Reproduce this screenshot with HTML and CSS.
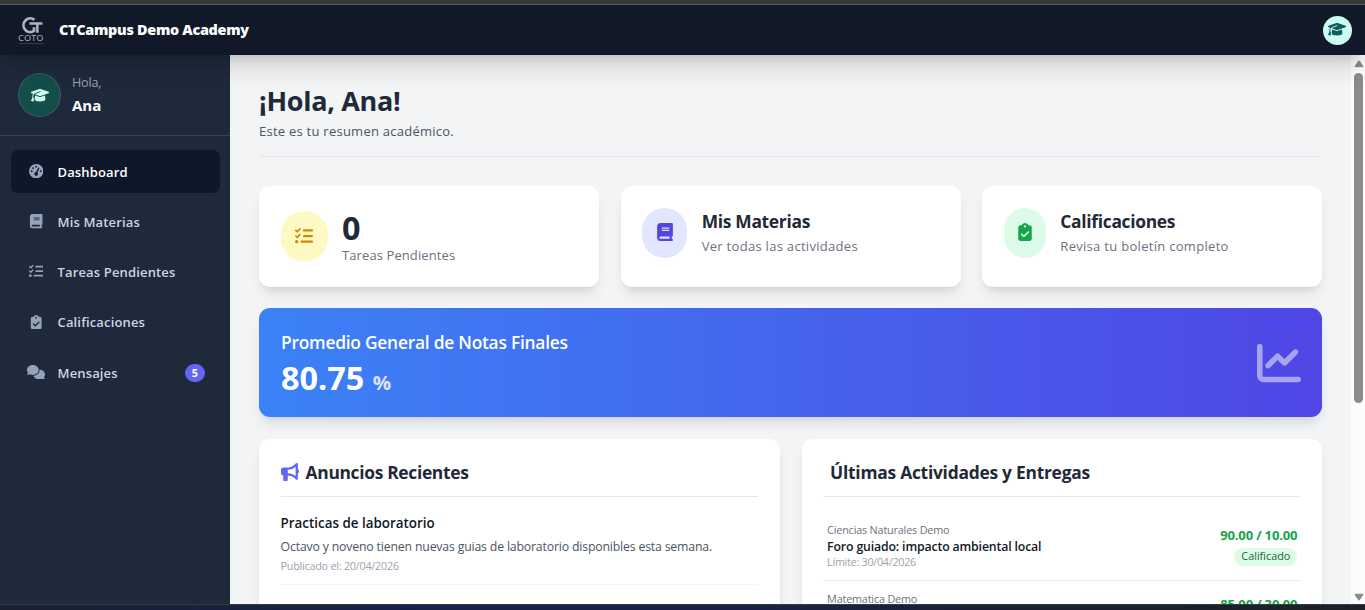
FILE: index.html
```
<!DOCTYPE html>
<html lang="es">
<head>
  <meta charset="UTF-8">
  <meta name="viewport" content="width=device-width, initial-scale=1.0">
  <title>CTCampus Demo Academy</title>
  <link rel="stylesheet" href="styles.css">
</head>
<body>

<!-- Iconos -->
<svg class="sprite" width="0" height="0">
  <symbol id="i-cap" viewBox="0 0 640 512"><path d="M320 32c-8.1 0-16.1 1.4-23.7 4.1L15.8 137.4C6.3 140.9 0 149.9 0 160s6.3 19.1 15.8 22.6l57.9 20.9C57.3 229.3 48 259.8 48 291.9v28.1c0 28.4-10.8 57.7-22.3 80.8c-6.5 13-13.9 25.8-22.5 37.6C0 442.7-.9 448.3 .9 453.4s6 8.9 11.2 10.2l64 16c4.2 1.1 8.7 .3 12.4-2s6.3-6.1 7.1-10.4c8.6-42.8 4.3-81.2-2.1-108.7C90.3 344.3 86 329.8 80 316.5V291.9c0-30.2 10.2-58.7 27.9-81.5c12.9-15.5 29.6-28 49.2-35.7l157-61.7c8.2-3.2 17.5 .8 20.7 9s-.8 17.5-9 20.7l-157 61.7c-12.4 4.9-23.3 12.4-32.2 21.6l159.6 57.6c7.6 2.7 15.6 4.1 23.7 4.1s16.1-1.4 23.7-4.1L624.2 182.6c9.5-3.4 15.8-12.5 15.8-22.6s-6.3-19.1-15.8-22.6L343.7 36.1C336.1 33.4 328.1 32 320 32zM128 408c0 35.3 86 72 192 72s192-36.7 192-72L496.7 262.6 354.5 314c-11.1 4-22.8 6-34.5 6s-23.5-2-34.5-6L143.3 262.6 128 408z"/></symbol>
  <symbol id="i-gauge" viewBox="0 0 512 512"><path d="M0 256a256 256 0 1 1 512 0A256 256 0 1 1 0 256zM288 96a32 32 0 1 0 -64 0 32 32 0 1 0 64 0zM256 416c35.3 0 64-28.7 64-64c0-17.4-6.9-33.1-18.1-44.6L366 161.7c5.3-12.1-.2-26.3-12.3-31.6s-26.3 .2-31.6 12.3L257.9 288c-.6 0-1.3 0-1.9 0c-35.3 0-64 28.7-64 64s28.7 64 64 64zM176 144a32 32 0 1 0 -64 0 32 32 0 1 0 64 0zM96 288a32 32 0 1 0 0-64 32 32 0 1 0 0 64zm352-32a32 32 0 1 0 -64 0 32 32 0 1 0 64 0z"/></symbol>
  <symbol id="i-book" viewBox="0 0 448 512"><path d="M96 0C43 0 0 43 0 96V416c0 53 43 96 96 96H384h32c17.7 0 32-14.3 32-32s-14.3-32-32-32V384c17.7 0 32-14.3 32-32V32c0-17.7-14.3-32-32-32H384 96zm0 384H352v64H96c-17.7 0-32-14.3-32-32s14.3-32 32-32zm32-240c0-8.8 7.2-16 16-16H336c8.8 0 16 7.2 16 16s-7.2 16-16 16H144c-8.8 0-16-7.2-16-16zm16 48H336c8.8 0 16 7.2 16 16s-7.2 16-16 16H144c-8.8 0-16-7.2-16-16s7.2-16 16-16z"/></symbol>
  <symbol id="i-list" viewBox="0 0 512 512"><path d="M152.1 38.2c9.9 8.9 10.7 24 1.8 33.9l-72 80c-4.4 4.9-10.6 7.8-17.2 7.9s-12.9-2.4-17.6-7L7 113C-2.3 103.6-2.3 88.4 7 79s24.6-9.4 33.9 0l22.1 22.1 55.1-61.2c8.9-9.9 24-10.7 33.9-1.8zm0 160c9.9 8.9 10.7 24 1.8 33.9l-72 80c-4.4 4.9-10.6 7.8-17.2 7.9s-12.9-2.4-17.6-7L7 273c-9.4-9.4-9.4-24.6 0-33.9s24.6-9.4 33.9 0l22.1 22.1 55.1-61.2c8.9-9.9 24-10.7 33.9-1.8zM224 96c0-17.7 14.3-32 32-32H480c17.7 0 32 14.3 32 32s-14.3 32-32 32H256c-17.7 0-32-14.3-32-32zm0 160c0-17.7 14.3-32 32-32H480c17.7 0 32 14.3 32 32s-14.3 32-32 32H256c-17.7 0-32-14.3-32-32zM160 416c0-17.7 14.3-32 32-32H480c17.7 0 32 14.3 32 32s-14.3 32-32 32H192c-17.7 0-32-14.3-32-32zM48 368a48 48 0 1 1 0 96 48 48 0 1 1 0-96z"/></symbol>
  <symbol id="i-clip" viewBox="0 0 384 512"><path d="M192 0c-41.8 0-77.4 26.7-90.5 64H64C28.7 64 0 92.7 0 128V448c0 35.3 28.7 64 64 64H320c35.3 0 64-28.7 64-64V128c0-35.3-28.7-64-64-64H282.5C269.4 26.7 233.8 0 192 0zm0 64a32 32 0 1 1 0 64 32 32 0 1 1 0-64zM305 273L177 401c-9.4 9.4-24.6 9.4-33.9 0L79 337c-9.4-9.4-9.4-24.6 0-33.9s24.6-9.4 33.9 0l47 47L271 239c9.4-9.4 24.6-9.4 33.9 0s9.4 24.6 0 33.9z"/></symbol>
  <symbol id="i-comments" viewBox="0 0 640 512"><path d="M208 352c114.9 0 208-78.8 208-176S322.9 0 208 0S0 78.8 0 176c0 38.6 14.7 74.3 39.6 103.4c-3.5 9.4-8.7 17.7-14.2 24.7c-4.8 6.2-9.7 11-13.3 14.3c-1.8 1.6-3.3 2.9-4.3 3.7c-.5 .4-.9 .7-1.1 .8l-.2 .2C1 327.2-1.4 334.4 .8 340.9S9.1 352 16 352c21.8 0 43.8-5.6 62.1-12.5c9.2-3.5 17.8-7.4 25.2-11.4C134.1 343.3 169.8 352 208 352zM448 176c0 112.3-99.1 196.9-216.5 207C255.8 457.4 336.4 512 432 512c38.2 0 73.9-8.7 104.7-23.9c7.5 4 16 7.9 25.2 11.4c18.3 6.9 40.3 12.5 62.1 12.5c6.9 0 13.1-4.5 15.2-11.1c2.1-6.6-.2-13.8-5.8-17.9l-.2-.2c-.2-.2-.6-.4-1.1-.8c-1-.8-2.5-2-4.3-3.7c-3.6-3.3-8.5-8.1-13.3-14.3c-5.5-7-10.7-15.4-14.2-24.7c24.9-29 39.6-64.7 39.6-103.4c0-92.8-84.9-168.9-192.6-175.5c.4 5.1 .6 10.3 .6 15.5z"/></symbol>
  <symbol id="i-chart" viewBox="0 0 512 512"><path d="M64 64c0-17.7-14.3-32-32-32S0 46.3 0 64V400c0 44.2 35.8 80 80 80H480c17.7 0 32-14.3 32-32s-14.3-32-32-32H80c-8.8 0-16-7.2-16-16V64zm406.6 86.6c12.5-12.5 12.5-32.8 0-45.3s-32.8-12.5-45.3 0L320 210.7l-57.4-57.4c-12.5-12.5-32.8-12.5-45.3 0l-112 112c-12.5 12.5-12.5 32.8 0 45.3s32.8 12.5 45.3 0L240 221.3l57.4 57.4c12.5 12.5 32.8 12.5 45.3 0l128-128z"/></symbol>
  <symbol id="i-horn" viewBox="0 0 512 512"><path d="M480 32c0-12.9-7.8-24.6-19.8-29.6s-25.7-2.2-34.9 6.9L381.7 53c-48 48-113.1 75-181 75H192 160 64c-35.3 0-64 28.7-64 64v96c0 35.3 28.7 64 64 64l0 128c0 17.7 14.3 32 32 32h64c17.7 0 32-14.3 32-32V352l8.7 0c67.9 0 133 27 181 75l43.6 43.6c9.2 9.2 22.9 11.9 34.9 6.9s19.8-16.6 19.8-29.6V300.4c18.6-8.8 32-32.5 32-60.4s-13.4-51.6-32-60.4V32zm-64 76.7V240 371.3C357.2 317.8 280.5 288 200.7 288H192V192h8.7c79.8 0 156.5-29.8 215.3-83.3z"/></symbol>
</svg>

<div class="window-top"></div>

<header class="topbar">
  <div class="logo">
    <svg class="logo-mark" viewBox="0 0 22 16">
      <path d="M13.8 2.6A6.5 6.5 0 1 0 13.4 13.2V9.6" fill="none" stroke="#aeb2bd" stroke-width="2.6"/>
      <path d="M9 6H21.5M16.6 6V15" fill="none" stroke="#aeb2bd" stroke-width="2.4"/>
    </svg>
    <span class="logo-name">COTO</span>
    <span class="logo-line"></span>
  </div>
  <span class="brand">CTCampus Demo Academy</span>
  <div class="user-btn"><svg class="icon"><use href="#i-cap"/></svg></div>
</header>

<div class="layout">
  <aside class="sidebar">
    <div class="profile">
      <div class="avatar"><svg class="icon"><use href="#i-cap"/></svg></div>
      <div>
        <p class="profile-hi">Hola,</p>
        <p class="profile-name">Ana</p>
      </div>
    </div>
    <nav class="menu">
      <a class="menu-item active"><span class="menu-icon"><svg class="icon"><use href="#i-gauge"/></svg></span><span>Dashboard</span></a>
      <a class="menu-item"><span class="menu-icon"><svg class="icon"><use href="#i-book"/></svg></span><span>Mis Materias</span></a>
      <a class="menu-item"><span class="menu-icon"><svg class="icon"><use href="#i-list"/></svg></span><span>Tareas Pendientes</span></a>
      <a class="menu-item"><span class="menu-icon"><svg class="icon"><use href="#i-clip"/></svg></span><span>Calificaciones</span></a>
      <a class="menu-item"><span class="menu-icon"><svg class="icon wide"><use href="#i-comments"/></svg></span><span>Mensajes</span><span class="badge">5</span></a>
    </nav>
  </aside>

  <main class="content">
    <div class="page-head">
      <h1>¡Hola, Ana!</h1>
      <p>Este es tu resumen académico.</p>
    </div>

    <div class="cards">
      <div class="card card-tasks">
        <div class="circle yellow"><svg class="icon"><use href="#i-list"/></svg></div>
        <div>
          <p class="count">0</p>
          <p class="card-sub">Tareas Pendientes</p>
        </div>
      </div>
      <div class="card">
        <div class="circle indigo"><svg class="icon"><use href="#i-book"/></svg></div>
        <div>
          <h3>Mis Materias</h3>
          <p class="card-sub">Ver todas las actividades</p>
        </div>
      </div>
      <div class="card">
        <div class="circle green"><svg class="icon"><use href="#i-clip"/></svg></div>
        <div>
          <h3>Calificaciones</h3>
          <p class="card-sub">Revisa tu boletín completo</p>
        </div>
      </div>
    </div>

    <div class="average">
      <div class="average-text">
        <h2>Promedio General de Notas Finales</h2>
        <p class="average-value">80.75 <span>%</span></p>
      </div>
      <svg class="icon"><use href="#i-chart"/></svg>
    </div>

    <div class="panels">
      <section class="panel">
        <h2 class="panel-title"><svg class="icon"><use href="#i-horn"/></svg><span>Anuncios Recientes</span></h2>
        <article class="news">
          <h4>Practicas de laboratorio</h4>
          <p class="news-body">Octavo y noveno tienen nuevas guias de laboratorio disponibles esta semana.</p>
          <p class="news-date">Publicado el: 20/04/2026</p>
        </article>
      </section>
      <section class="panel">
        <h2 class="panel-title title-activity"><span>Últimas Actividades y Entregas</span></h2>
        <div class="activity first">
          <div>
            <p class="subject">Ciencias Naturales Demo</p>
            <p class="task">Foro guiado: impacto ambiental local</p>
            <p class="limit">Límite: 30/04/2026</p>
          </div>
          <div class="result">
            <p class="grade">90.00 / 10.00</p>
            <span class="status">Calificado</span>
          </div>
        </div>
        <div class="activity">
          <div>
            <p class="subject">Matematica Demo</p>
          </div>
          <div class="result">
            <p class="grade">85.00 / 30.00</p>
          </div>
        </div>
      </section>
    </div>
  </main>

  <div class="scrollbar">
    <svg viewBox="0 0 10 8"><path d="M4 1.2Q5 0 6 1.2L9.3 6Q9.6 7.3 8.4 7.3H1.6Q.4 7.3 .7 6Z"/></svg>
    <div class="thumb"></div>
    <svg class="down" viewBox="0 0 10 8"><path d="M4 6.8Q5 8 6 6.8L9.3 2Q9.6 .7 8.4 .7H1.6Q.4 .7 .7 2Z"/></svg>
  </div>
</div>

<div class="window-bottom"></div>

</body>
</html>
```

FILE: styles.css
```
* {
  box-sizing: border-box;
}
html {
  font-size: 14.4px;
}
body {
  margin: 0;
  height: 610px;
  overflow: hidden;
  display: flex;
  flex-direction: column;
  font-family: "Open Sans", "Noto Sans", sans-serif;
  background-color: #f3f4f6;
  color: #1f2937;
}
h1, h2, h3, h4, p {
  margin: 0;
  white-space: nowrap;
}
.sprite {
  display: none;
}
.icon {
  width: 1em;
  height: 1em;
  fill: currentColor;
  display: block;
}
.window-top {
  height: 5px;
  flex: none;
  background-color: #363636;
  border-bottom: 1px solid #5c5c5c;
}
.window-bottom {
  height: 6px;
  flex: none;
  border-top: 1px solid #343c46;
  background: linear-gradient(90deg, #1a2130, #14204a 30%, #1a2148 55%, #1a2130 75%, #1c2128);
}

/* Barra superior */
.topbar {
  height: 50px;
  flex: none;
  display: flex;
  align-items: center;
  padding: 0 13px 0 18px;
  background-color: #111827;
  box-shadow: 0 18px 22px -4px rgba(0, 0, 0, .12), 0 7px 9px -4px rgba(0, 0, 0, .12);
  z-index: 2;
}
.logo {
  width: 26px;
  height: 29px;
  padding-top: 1px;
  display: flex;
  flex-direction: column;
  align-items: center;
}
.logo-mark {
  width: 23px;
  height: 17px;
  margin-left: 1px;
  flex: none;
}
.logo-name {
  font-family: Lato, sans-serif;
  font-size: 8.4px;
  line-height: 9px;
  letter-spacing: .5px;
  color: #aeb2bd;
}
.logo-line {
  width: 24px;
  border-top: 1px solid #343a4a;
}
.brand {
  margin: -1px 0 0 15px;
  font-weight: 800;
  font-size: 14.4px;
  letter-spacing: -.29px;
  color: #fff;
}
.user-btn {
  width: 29px;
  height: 29px;
  margin-left: auto;
  border-radius: 50%;
  background-color: #ccfbf1;
  color: #115e59;
  display: flex;
  align-items: center;
  justify-content: center;
}
.user-btn .icon {
  width: 18px;
  height: 14.4px;
  margin: -1px 2px 0 0;
}
.layout {
  flex: 1;
  min-height: 0;
  display: flex;
}

/* Menu lateral */
.sidebar {
  width: 230px;
  flex: none;
  background-color: #1e293b;
}
.profile {
  height: 81px;
  display: flex;
  align-items: center;
  gap: 11px;
  padding-left: 18px;
  border-bottom: 1px solid #334155;
}
.avatar {
  width: 43px;
  height: 44px;
  border-radius: 50%;
  border: 1px solid #475569;
  background-color: #134e4a;
  color: #ccfbf1;
  display: flex;
  align-items: center;
  justify-content: center;
}
.avatar .icon {
  width: 18px;
  height: 14.4px;
}
.profile-hi {
  font-size: 12.6px;
  line-height: 20px;
  letter-spacing: -.2px;
  color: #94a3b8;
}
.profile-name {
  font-size: 15px;
  line-height: 24px;
  font-weight: 700;
  color: #fff;
}
.menu {
  display: flex;
  flex-direction: column;
  gap: 7.2px;
  padding: 14px 10px 0 11px;
}
.menu-item {
  height: 43.1px;
  border-radius: 7px;
  display: flex;
  align-items: center;
  padding: 0 15px 0 14px;
  font-size: 13px;
  font-weight: 600;
  letter-spacing: .15px;
  color: #cbd5e1;
}
.menu-item.active {
  background-color: #0f172a;
  color: #fff;
}
.menu-icon {
  width: 22px;
  margin: -1px 10.5px 0 0;
  display: flex;
  justify-content: center;
  font-size: 14.4px;
  color: #94a3b8;
}
.icon.wide {
  width: 18px;
}
.badge {
  margin-left: auto;
  width: 20px;
  height: 18px;
  border-radius: 9px;
  background-color: #6366f1;
  color: #fff;
  font-size: 10.8px;
  line-height: 18px;
  font-weight: 700;
  text-align: center;
}

/* Contenido */
.content {
  flex: 1;
  overflow: hidden;
  padding: 29px 28.6px 29px 29px;
}
.page-head {
  height: 73px;
  border-bottom: 1px solid #e5e7eb;
}
.page-head h1 {
  font-size: 27px;
  line-height: 34px;
  font-weight: 700;
  letter-spacing: -.3px;
}
.page-head p {
  font-size: 13px;
  line-height: 22px;
  margin-top: 2px;
  color: #4b5563;
  letter-spacing: .25px;
}
.cards {
  display: grid;
  grid-template-columns: repeat(3, 1fr);
  gap: 21.6px;
  margin-top: 29px;
}
.card,
.panel,
.average {
  border-radius: 11px;
  background-color: #fff;
  box-shadow: 0 9px 13px -3px rgba(0, 0, 0, .1), 0 4px 6px -4px rgba(0, 0, 0, .1);
}
.card {
  height: 101px;
  padding: 22px 21.6px;
  display: flex;
  align-items: flex-start;
  gap: 14.4px;
}
.card-tasks {
  align-items: center;
}
.circle {
  height: 50px;
  padding-bottom: 2px;
  border-radius: 25px;
  display: flex;
  align-items: center;
  justify-content: center;
  font-size: 18px;
}
.yellow {
  width: 47px;
  height: 51px;
  background-color: #fef9c3;
  color: #ca8a04;
}
.indigo {
  width: 45px;
  background-color: #e0e7ff;
  color: #4f46e5;
}
.green {
  width: 42px;
  background-color: #dcfce7;
  color: #16a34a;
}
.card h3 {
  font-size: 17.4px;
  line-height: 26px;
  font-weight: 700;
  letter-spacing: -.3px;
}
.card-sub {
  margin-top: 1px;
  font-size: 13px;
  line-height: 22px;
  letter-spacing: .3px;
  color: #6b7280;
}
.card-tasks .card-sub {
  margin-top: 0;
  letter-spacing: .1px;
}
.count {
  padding-top: 3px;
  font-size: 32.4px;
  line-height: 34px;
  font-weight: 700;
}
.average {
  height: 109px;
  margin-top: 21px;
  padding: 0 21px 0 22px;
  display: flex;
  align-items: center;
  justify-content: space-between;
  background: linear-gradient(90deg, #3b82f6, #4f46e5);
  color: #fff;
}
.average-text {
  padding-top: 6px;
}
.average h2 {
  font-size: 17.4px;
  line-height: 26px;
  font-weight: 600;
  letter-spacing: -.25px;
}
.average-value {
  font-size: 32.4px;
  line-height: 40px;
  font-weight: 700;
  margin-top: 2px;
}
.average-value span {
  font-size: 20.4px;
  font-weight: 700;
  opacity: .8;
}
.average .icon {
  font-size: 44px;
  opacity: .5;
}
.panels {
  display: grid;
  grid-template-columns: 1fr 1fr;
  gap: 21.6px;
  margin-top: 22px;
}
.panel {
  height: 300px;
  padding: 21.6px;
}
.panel-title {
  height: 36px;
  display: flex;
  gap: 7px;
  border-bottom: 1px solid #e5e7eb;
  font-size: 17.4px;
  line-height: 23px;
  font-weight: 700;
  letter-spacing: -.32px;
}
.panel-title .icon {
  margin-top: 2px;
  font-size: 18px;
  color: #6366f1;
}
.title-activity {
  padding-left: 7px;
  letter-spacing: -.25px;
}
.news {
  height: 88px;
  padding-top: 15px;
  border-bottom: 1px solid #f3f4f6;
}
.news h4 {
  font-size: 13.4px;
  line-height: 22px;
  font-weight: 600;
  color: #111827;
}
.news-body {
  font-size: 12.3px;
  line-height: 25px;
  letter-spacing: -.18px;
  color: #4b5563;
}
.news-date {
  font-size: 10.8px;
  line-height: 14px;
  letter-spacing: -.24px;
  color: #9ca3af;
}
.activity {
  display: flex;
  justify-content: space-between;
  padding: 10px 3.5px 0 4px;
}
.activity.first {
  height: 84px;
  padding-top: 25px;
  border-bottom: 1px solid #e5e7eb;
}
.subject {
  font-size: 10.8px;
  line-height: 16px;
  letter-spacing: -.17px;
  color: #6b7280;
}
.task {
  font-size: 12.3px;
  line-height: 17px;
  font-weight: 600;
  letter-spacing: -.15px;
  color: #111827;
}
.limit {
  font-size: 10.8px;
  line-height: 14px;
  letter-spacing: -.28px;
  color: #9ca3af;
}
.result {
  display: flex;
  flex-direction: column;
  align-items: flex-end;
}
.grade {
  margin-top: 4px;
  font-size: 13px;
  line-height: 19px;
  font-weight: 700;
  letter-spacing: -.15px;
  color: #16a34a;
}
.status {
  margin-top: 3px;
  width: 63px;
  height: 18px;
  border-radius: 9px;
  background-color: #dcfce7;
  color: #166534;
  font-size: 10.8px;
  line-height: 16px;
  font-weight: 500;
  text-align: center;
}

/* Barra de desplazamiento */
.scrollbar {
  width: 14px;
  flex: none;
  background-color: #fcfcfc;
  display: flex;
  flex-direction: column;
  align-items: center;
  padding: 5px 0 3px 1px;
}
.scrollbar svg {
  width: 10px;
  height: 8px;
  fill: #8b8b8b;
}
.thumb {
  width: 9px;
  height: 330px;
  margin-top: 5px;
  border-radius: 5px;
  background-color: #8b8b8b;
}
.scrollbar .down {
  margin-top: auto;
}
```
